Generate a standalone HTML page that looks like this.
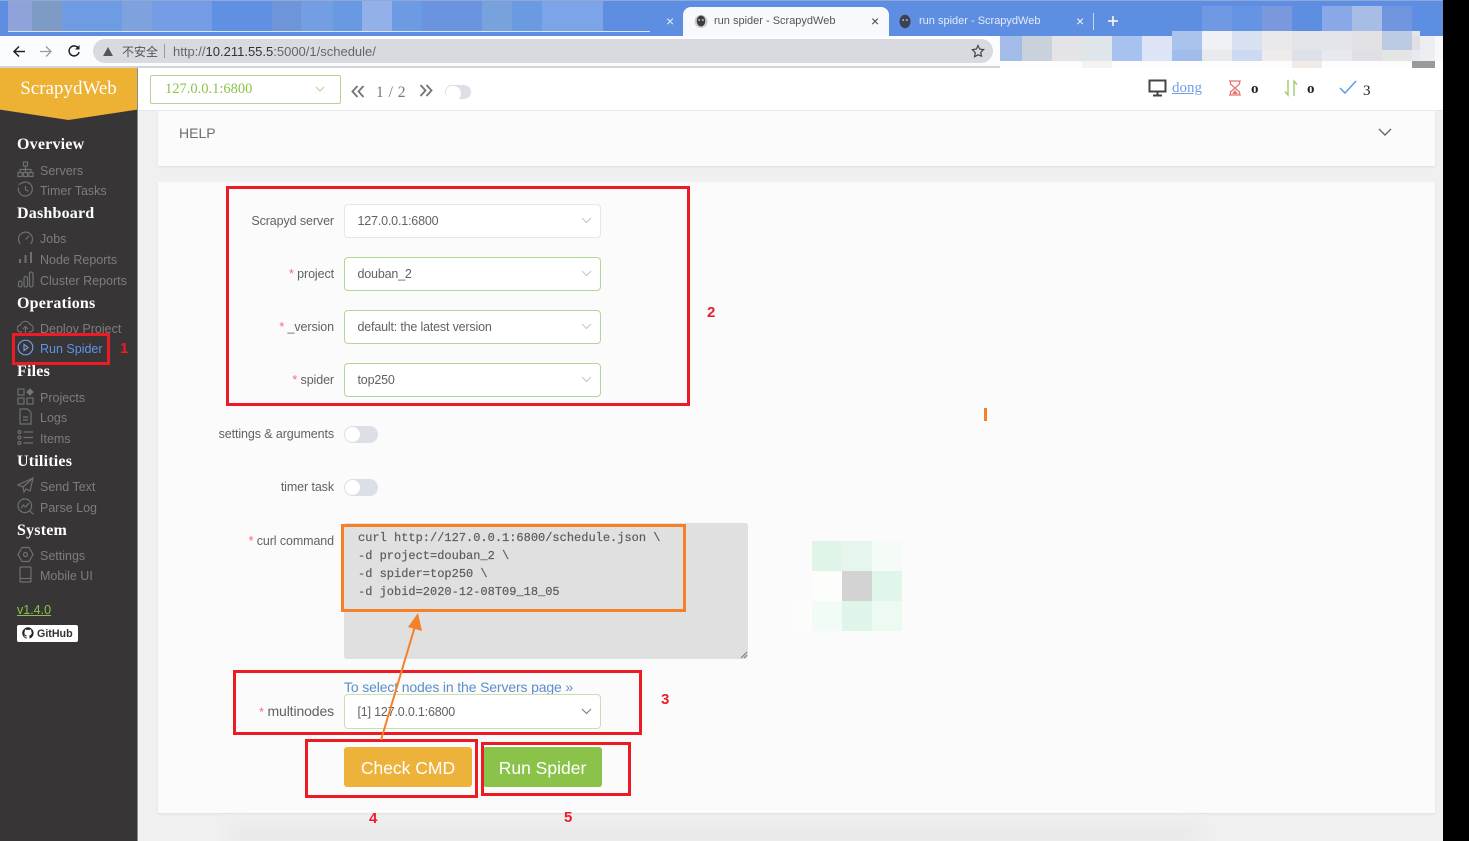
<!DOCTYPE html>
<html><head><meta charset="utf-8"><title>run spider - ScrapydWeb</title>
<style>
*{box-sizing:border-box}
html,body{margin:0;padding:0;width:1469px;height:841px;overflow:hidden;background:#000}
body{position:relative;font-family:"Liberation Sans","Noto Sans CJK SC",sans-serif}
.a,.b,.h,.n,.l,.s,.r,.num,svg.i{position:absolute}
.b{display:block}
.h{left:17px;font:bold 16px/20px "Liberation Serif",serif;color:#fff;white-space:nowrap;letter-spacing:.2px}
.n{left:40px;font-size:12.5px;line-height:20px;color:#7e7d7d;white-space:nowrap}
.l{right:1135px;font-size:12.5px;line-height:20px;color:#606266;white-space:nowrap;letter-spacing:-.1px}
.l i{font-style:normal;color:#f56c6c}
.s{left:344px;width:257px;background:#fff;border:1.5px solid #b5d597;border-radius:4px;font-size:12.5px;color:#606266;padding-left:12.5px;letter-spacing:-.18px}
.s svg{position:absolute;right:8px;top:50%;margin-top:-4px}
.r{border:3px solid #ed1c24}
.num{font:bold 15px/20px "Liberation Sans",sans-serif;color:#ed1c24}
svg.i{fill:none;stroke:#707070;stroke-width:1.2;left:17px;width:17px;height:17px}
.t{position:absolute;left:344px;width:34px;height:17px;background:#dcdfe6;border-radius:9px}
.t:after{content:"";position:absolute;left:1px;top:1px;width:15px;height:15px;background:#fff;border-radius:50%}
.m{position:absolute;left:358px;font:12px/18px "Liberation Mono",monospace;color:#5d5d5d;white-space:pre;-webkit-text-stroke:.2px #5d5d5d}
</style></head><body>

<!-- page base -->
<div class="b" style="left:0;top:0;width:1443px;height:841px;background:#f0f0f1"></div>

<!-- tab strip -->
<div class="b" style="left:0;top:0;width:1443px;height:36px;background:#5e8ee2"></div>
<div class="b" style="left:0;top:0;width:1443px;height:1px;background:#8fa8d8"></div>
<div class="b" style="left:8px;top:1px;width:24px;height:31px;background:#8fa3da"></div>
<div class="b" style="left:32px;top:1px;width:30px;height:31px;background:#7e9bc6"></div>
<div class="b" style="left:62px;top:1px;width:30px;height:31px;background:#6f9be2"></div>
<div class="b" style="left:92px;top:1px;width:30px;height:31px;background:#6e9ce4"></div>
<div class="b" style="left:122px;top:1px;width:30px;height:31px;background:#7ea2de"></div>
<div class="b" style="left:152px;top:1px;width:60px;height:31px;background:#749de5"></div>
<div class="b" style="left:212px;top:1px;width:60px;height:31px;background:#5f90e2"></div>
<div class="b" style="left:272px;top:1px;width:29px;height:31px;background:#6e95d8"></div>
<div class="b" style="left:301px;top:1px;width:32px;height:31px;background:#749ee3"></div>
<div class="b" style="left:333px;top:1px;width:29px;height:31px;background:#6a99e4"></div>
<div class="b" style="left:362px;top:1px;width:30px;height:31px;background:#92b1e8"></div>
<div class="b" style="left:392px;top:1px;width:30px;height:31px;background:#6d9be3"></div>
<div class="b" style="left:422px;top:1px;width:60px;height:31px;background:#6a94e0"></div>
<div class="b" style="left:482px;top:1px;width:30px;height:31px;background:#78a2dc"></div>
<div class="b" style="left:512px;top:1px;width:30px;height:31px;background:#6a9ae2"></div>
<div class="b" style="left:542px;top:1px;width:61px;height:31px;background:#7ca5e7"></div>
<div class="b" style="left:8px;top:31px;width:642px;height:1px;background:#dbe5f7"></div>

<div class="b" style="left:1202px;top:6px;width:30px;height:25px;background:#7099e3"></div>
<div class="b" style="left:1232px;top:6px;width:30px;height:25px;background:#6694e4"></div>
<div class="b" style="left:1262px;top:6px;width:30px;height:25px;background:#7a99dd"></div>
<div class="b" style="left:1322px;top:6px;width:30px;height:25px;background:#88a8e7"></div>
<div class="b" style="left:1352px;top:6px;width:30px;height:25px;background:#a8bde6"></div>
<div class="b" style="left:1382px;top:6px;width:30px;height:25px;background:#7096e0"></div>

<!-- tabs -->
<div class="b" style="left:683px;top:7px;width:206px;height:29px;background:#f8f9fc;border-radius:8px 8px 0 0"></div>
<div class="a" style="left:666px;top:11px;font-size:14px;line-height:20px;color:#e8eefb">×</div>
<svg class="a" style="left:694px;top:14px" width="14" height="15" viewBox="0 0 14 15"><circle cx="7" cy="7.500" r="6.500" fill="#ccc"/><ellipse cx="7" cy="7" rx="4.300" ry="5.500" fill="#3d3d3d"/><circle cx="5.200" cy="6" r="1" fill="#bbb"/><circle cx="8.800" cy="6" r="1" fill="#bbb"/></svg>
<div class="a" style="left:714px;top:11px;font-size:11px;line-height:20px;color:#555;white-space:nowrap">run spider - ScrapydWeb</div>
<div class="a" style="left:871px;top:11px;font-size:14px;line-height:20px;color:#444">×</div>
<svg class="a" style="left:898px;top:14px" width="14" height="15" viewBox="0 0 14 15"><ellipse cx="7" cy="7.500" rx="5.500" ry="6.800" fill="#3b4252"/><circle cx="5.200" cy="6" r="1" fill="#a8b4cc"/><circle cx="8.800" cy="6" r="1" fill="#a8b4cc"/></svg>
<div class="a" style="left:919px;top:11px;font-size:11px;line-height:20px;color:#e4ebfa;white-space:nowrap">run spider - ScrapydWeb</div>
<div class="a" style="left:1076px;top:11px;font-size:14px;line-height:20px;color:#eef3fd">×</div>
<div class="b" style="left:1093px;top:13px;width:1px;height:17px;background:#c5d6f5"></div>
<svg class="a" style="left:1107px;top:15px" width="12" height="12" viewBox="0 0 12 12"><path d="M6 1v10M1 6h10" stroke="#fff" stroke-width="1.5"/></svg>

<!-- toolbar -->
<div class="b" style="left:0;top:36px;width:1443px;height:31px;background:#fbfcfe"></div>
<div class="b" style="left:0;top:66px;width:1443px;height:2px;background:#d4d4d6"></div>
<svg class="a" style="left:12px;top:45px" width="14" height="13" viewBox="0 0 14 13"><path d="M13 6.500H2M7 1.500L2 6.500l5 5" fill="none" stroke="#222" stroke-width="1.500"/></svg>
<svg class="a" style="left:39px;top:45px" width="14" height="13" viewBox="0 0 14 13"><path d="M1 6.500h11M7 1.500l5 5-5 5" fill="none" stroke="#9a9a9a" stroke-width="1.300"/></svg>
<svg class="a" style="left:67px;top:44px" width="14" height="14" viewBox="0 0 14 14"><path d="M11.500 4.500A5 5 0 1 0 12 8" fill="none" stroke="#222" stroke-width="1.500"/><path d="M12.500 1v4.500H8z" fill="#222"/></svg>
<div class="b" style="left:93px;top:39px;width:900px;height:24px;background:#d9dadf;border-radius:12px"></div>
<svg class="a" style="left:103px;top:47px" width="10" height="9" viewBox="0 0 11 10"><path d="M5.500 0L11 10H0z" fill="#555"/></svg>
<div class="a" style="left:122px;top:42px;font-size:12px;line-height:20px;color:#555;white-space:nowrap">不安全</div>
<div class="b" style="left:164px;top:44px;width:1px;height:14px;background:#999"></div>
<div class="a" style="left:173px;top:42px;font-size:13px;line-height:20px;color:#666;white-space:nowrap">http://<span style="color:#333">10.211.55.5</span>:5000/1/schedule/</div>
<svg class="a" style="left:971px;top:44px" width="14" height="14" viewBox="0 0 14 14"><path d="M7 1.500l1.700 3.600 3.900.5-2.900 2.700.8 3.900L7 10.800l-3.500 1.900.8-3.900L1.400 5.600l3.900-.5z" fill="none" stroke="#444" stroke-width="1.200"/></svg>

<!-- blurred right toolbar -->
<div class="b" style="left:1000px;top:36px;width:443px;height:32px;background:#fdfdfe"></div>
<div class="b" style="left:1172px;top:31px;width:248px;height:5px;background:#e4e5ea"></div>
<div class="b" style="left:1000px;top:36px;width:22px;height:25px;background:#a2bbe8"></div>
<div class="b" style="left:1022px;top:36px;width:30px;height:25px;background:#c9d1da"></div>
<div class="b" style="left:1052px;top:36px;width:30px;height:25px;background:#e4e3e6"></div>
<div class="b" style="left:1082px;top:36px;width:30px;height:25px;background:#dfe6ea"></div>
<div class="b" style="left:1112px;top:36px;width:30px;height:25px;background:#a8c2ef"></div>
<div class="b" style="left:1142px;top:36px;width:30px;height:25px;background:#dde4f5"></div>
<div class="b" style="left:1172px;top:31px;width:30px;height:19px;background:#a9c3ec"></div>
<div class="b" style="left:1172px;top:50px;width:30px;height:11px;background:#a0bceb"></div>
<div class="b" style="left:1202px;top:31px;width:30px;height:19px;background:#eff1f6"></div>
<div class="b" style="left:1202px;top:50px;width:30px;height:11px;background:#e9eaee"></div>
<div class="b" style="left:1232px;top:31px;width:30px;height:19px;background:#d7e1f1"></div>
<div class="b" style="left:1232px;top:50px;width:30px;height:11px;background:#cbd9f2"></div>
<div class="b" style="left:1262px;top:31px;width:30px;height:19px;background:#e9e8ea"></div>
<div class="b" style="left:1262px;top:50px;width:30px;height:11px;background:#efebeb"></div>
<div class="b" style="left:1292px;top:31px;width:30px;height:19px;background:#e4e5ea"></div>
<div class="b" style="left:1292px;top:50px;width:30px;height:11px;background:#dfe1e8"></div>
<div class="b" style="left:1322px;top:31px;width:30px;height:19px;background:#e4e5ea"></div>
<div class="b" style="left:1322px;top:50px;width:30px;height:11px;background:#e7e9ee"></div>
<div class="b" style="left:1352px;top:31px;width:30px;height:19px;background:#e2e1e6"></div>
<div class="b" style="left:1352px;top:50px;width:30px;height:11px;background:#dfdfe5"></div>
<div class="b" style="left:1382px;top:31px;width:30px;height:19px;background:#bccbe3"></div>
<div class="b" style="left:1382px;top:50px;width:30px;height:11px;background:#e4e6e6"></div>
<div class="b" style="left:1412px;top:36px;width:8px;height:14px;background:#e0e0e4"></div>
<div class="b" style="left:1412px;top:50px;width:8px;height:11px;background:#e9eaf0"></div>
<div class="b" style="left:1420px;top:36px;width:15px;height:25px;background:#eceef4"></div>
<div class="b" style="left:1435px;top:36px;width:8px;height:25px;background:#f8f8fb"></div>
<div class="b" style="left:1082px;top:61px;width:30px;height:7px;background:#f4f3f0"></div>
<div class="b" style="left:1292px;top:61px;width:30px;height:7px;background:#f0ebe6"></div>
<div class="b" style="left:1412px;top:61px;width:23px;height:7px;background:#9a9a9a"></div>

<!-- navbar -->
<div class="b" style="left:138px;top:68px;width:1305px;height:43px;background:#fff;border-bottom:1px solid #e8e8e8"></div>
<div class="a" style="left:150px;top:75px;width:191px;height:29px;border:1.500px solid #b5d597;border-radius:2px;background:#fff;font:14.500px/26px 'Liberation Serif',serif;color:#8bc34a;padding-left:14px">127.0.0.1:6800
<svg class="a" style="right:15px;top:10px" width="10" height="6" viewBox="0 0 10 6"><path d="M1 1l4 4 4-4" fill="none" stroke="#b5d597" stroke-width="1.100"/></svg></div>
<svg class="a" style="left:351px;top:85px" width="14" height="13" viewBox="0 0 14 13"><path d="M6.500 1L1.500 6.500l5 5.500M12.500 1l-5 5.500 5 5.500" fill="none" stroke="#777" stroke-width="1.900"/></svg>
<div class="a" style="left:376px;top:83px;font:15.500px/20px 'Liberation Serif',serif;color:#777;white-space:nowrap;letter-spacing:.5px">1 / 2</div>
<svg class="a" style="left:419px;top:84px" width="14" height="13" viewBox="0 0 14 13"><path d="M1.500 1l5 5.500-5 5.500M7.500 1l5 5.500-5 5.500" fill="none" stroke="#777" stroke-width="1.900"/></svg>
<div class="t" style="left:445px;top:85px;width:26px;height:14px"></div>
<div class="b" style="left:446px;top:86px;width:12px;height:12px;border-radius:50%;background:#fff"></div>

<svg class="a" style="left:1148px;top:79px" width="20" height="18" viewBox="0 0 20 18"><rect x="1.500" y="1.500" width="16" height="11" fill="none" stroke="#444" stroke-width="2"/><path d="M9.500 13v3M5 16.500h9" stroke="#444" stroke-width="2"/></svg>
<div class="a" style="left:1172px;top:78px;font:15px/20px 'Liberation Serif',serif;color:#6f9ee8;text-decoration:underline">dong</div>
<svg class="a" style="left:1228px;top:80px" width="14" height="16" viewBox="0 0 14 16"><path d="M1 1h12M1 15h12M2.500 1v3l4.500 4 4.500-4V1M2.500 15v-3L7 8l4.500 4v3" fill="none" stroke="#e57373" stroke-width="1.300"/><path d="M4 14l3-4 3 4z" fill="#e57373"/></svg>
<div class="a" style="left:1251px;top:79px;font:bold 15px/20px 'Liberation Serif',serif;color:#222">o</div>
<svg class="a" style="left:1284px;top:79px" width="16" height="18" viewBox="0 0 16 18"><path d="M4 1v15L1 12.500M10 17V2l3 3.500" fill="none" stroke="#9ccc65" stroke-width="1.400"/></svg>
<div class="a" style="left:1307px;top:79px;font:bold 15px/20px 'Liberation Serif',serif;color:#222">o</div>
<svg class="a" style="left:1339px;top:80px" width="18" height="15" viewBox="0 0 18 15"><path d="M1 8l5 5L17 1" fill="none" stroke="#5f9ae8" stroke-width="1.500"/></svg>
<div class="a" style="left:1363px;top:81px;font:15px/20px 'Liberation Serif',serif;color:#222">3</div>

<!-- cards -->
<div class="b" style="left:158px;top:111px;width:1277px;height:55px;background:#fbfbfc;box-shadow:0 1px 2px #dedee0"></div>
<div class="a" style="left:179px;top:123px;font-size:14px;line-height:20px;color:#6e6e6e">HELP</div>
<svg class="a" style="left:1378px;top:128px" width="14" height="9" viewBox="0 0 14 9"><path d="M1 1l6 6 6-6" fill="none" stroke="#666" stroke-width="1.400"/></svg>
<div class="b" style="left:158px;top:182px;width:1277px;height:631px;background:#fbfbfc;box-shadow:0 1px 2px #dedee0"></div>
<div class="b" style="left:230px;top:826px;width:970px;height:15px;background:#e7e7e8;filter:blur(8px)"></div>

<!-- sidebar -->
<div class="b" style="left:0;top:68px;width:138px;height:773px;background:#373535;border-right:1px solid #8a8a8a"></div>
<div class="b" style="left:0;top:68px;width:137px;height:52px;background:#edb133;clip-path:polygon(0 0,100% 0,100% 80%,50% 100%,0 80%)"></div>
<div class="a" style="left:0;top:78px;width:137px;text-align:center;font:19px/22px 'Liberation Serif',serif;color:#fff">ScrapydWeb</div>

<div class="h" style="top:135px">Overview</div>
<svg class="i" style="top:161px" viewBox="0 0 17 17"><rect x="6.500" y="1" width="4" height="4"/><rect x="1" y="11.500" width="4" height="4"/><rect x="6.500" y="11.500" width="4" height="4"/><rect x="12" y="11.500" width="4" height="4"/><path d="M8.500 5v6.500M3 11.500V8.500h11v3"/></svg>
<div class="n" style="top:161px">Servers</div>
<svg class="i" style="top:181px" viewBox="0 0 17 17"><path d="M4 2.500a7 7 0 1 1-2.500 4M8.500 5v4l3 1M1.500 3.500L4 2.500"/></svg>
<div class="n" style="top:181px">Timer Tasks</div>
<div class="h" style="top:204px">Dashboard</div>
<svg class="i" style="top:230px" viewBox="0 0 17 17"><path d="M3.500 14a7 7 0 1 1 10 0"/><path d="M8.500 9.500L12 6"/></svg>
<div class="n" style="top:229px">Jobs</div>
<svg class="i" style="top:250px;stroke-width:2" viewBox="0 0 17 17"><path d="M3 13V9M8.500 13V5M14 13V2"/></svg>
<div class="n" style="top:250px">Node Reports</div>
<svg class="i" style="top:271px" viewBox="0 0 17 17"><rect x="1.500" y="10" width="3.500" height="6" rx="1.700"/><rect x="7" y="5.500" width="3.500" height="10.500" rx="1.700"/><rect x="12.500" y="1" width="3.500" height="15" rx="1.700"/></svg>
<div class="n" style="top:271px">Cluster Reports</div>
<div class="h" style="top:294px">Operations</div>
<svg class="i" style="top:319px" viewBox="0 0 17 17"><path d="M5 13H4a3.500 3.500 0 0 1-.5-7A5 5 0 0 1 13 5.500a3.800 3.800 0 0 1 0 7.500h-1M8.500 16V8M6 10l2.500-2.500L11 10"/></svg>
<div class="n" style="top:319px">Deploy Project</div>
<svg class="i" style="top:339px;stroke:#6f9ae0" viewBox="0 0 17 17"><circle cx="8.500" cy="8.500" r="7.300"/><path d="M7 5.500l4 3-4 3z"/></svg>
<div class="n" style="top:339px;color:#5f93e8">Run Spider</div>
<div class="h" style="top:362px">Files</div>
<svg class="i" style="top:388px" viewBox="0 0 17 17"><rect x="1" y="1" width="6" height="6"/><rect x="1" y="10" width="6" height="6"/><rect x="10" y="10" width="6" height="6"/><path d="M13 1l3 3-3 3-3-3z" fill="#777"/></svg>
<div class="n" style="top:388px">Projects</div>
<svg class="i" style="top:408px" viewBox="0 0 17 17"><path d="M3 1h7.500L14 4.500V16H3zM6 9h5M6 12h5"/></svg>
<div class="n" style="top:408px">Logs</div>
<svg class="i" style="top:429px" viewBox="0 0 17 17"><circle cx="2.500" cy="3" r="1.500"/><circle cx="2.500" cy="8.500" r="1.500"/><circle cx="2.500" cy="14" r="1.500"/><path d="M6.500 3H16M6.500 8.500H16M6.500 14H16"/></svg>
<div class="n" style="top:429px">Items</div>
<div class="h" style="top:452px">Utilities</div>
<svg class="i" style="top:477px" viewBox="0 0 17 17"><path d="M16 1L1 8l5 2zM16 1L6 10l1 5 2-3 4 2z"/></svg>
<div class="n" style="top:477px">Send Text</div>
<svg class="i" style="top:498px" viewBox="0 0 17 17"><circle cx="7.800" cy="7.800" r="6.800"/><path d="M12.500 12.500L16.500 16.500M4 10l2.500-3 2 2L12 5"/></svg>
<div class="n" style="top:498px">Parse Log</div>
<div class="h" style="top:521px">System</div>
<svg class="i" style="top:546px" viewBox="0 0 17 17"><path d="M5 1.500h7l4 7-4 7H5l-4-7z"/><circle cx="8.500" cy="8.500" r="2"/></svg>
<div class="n" style="top:546px">Settings</div>
<svg class="i" style="top:566px" viewBox="0 0 17 17"><rect x="3" y="1" width="11" height="15" rx="1"/><path d="M3 12.500h11"/></svg>
<div class="n" style="top:566px">Mobile UI</div>
<div class="a" style="left:17px;top:600px;font-size:12.500px;line-height:20px;color:#8bc34a;text-decoration:underline">v1.4.0</div>
<div class="b" style="left:17px;top:625px;width:61px;height:17px;background:#fff;border-radius:2px"></div>
<svg class="a" style="left:22px;top:627px" width="12" height="12" viewBox="0 0 12 12"><path d="M6 .3a5.800 5.800 0 0 0-1.800 11.300c.3 0 .4-.1.400-.3v-1c-1.600.3-2-.8-2-.8-.3-.7-.7-.9-.7-.9-.5-.4 0-.4 0-.4.600 0 .9.600.9.600.5.900 1.400.6 1.800.5 0-.4.200-.6.400-.8-1.300-.1-2.600-.6-2.600-2.900 0-.6.200-1.200.6-1.600-.1-.1-.3-.8 0-1.600 0 0 .5-.2 1.600.6a5.500 5.500 0 0 1 2.900 0c1.100-.8 1.600-.6 1.600-.6.3.8.100 1.500 0 1.600.4.400.6 1 .6 1.600 0 2.300-1.400 2.800-2.600 2.900.2.200.4.500.4 1.100v1.600c0 .2.100.3.400.3A5.800 5.800 0 0 0 6 .3z" fill="#222"/></svg>
<div class="a" style="left:37px;top:624px;font:bold 10.700px/20px 'Liberation Sans',sans-serif;color:#333">GitHub</div>

<!-- form -->
<div class="l" style="top:211px">Scrapyd server</div>
<div class="s" style="top:204px;height:34px;line-height:33px;border-color:#e4e6eb">127.0.0.1:6800<svg width="11" height="7" viewBox="0 0 11 7"><path d="M1 1l4.500 4.500L10 1" fill="none" stroke="#c0c4cc"/></svg></div>
<div class="l" style="top:264px"><i>*</i> project</div>
<div class="s" style="top:257px;height:34px;line-height:33px">douban_2<svg width="11" height="7" viewBox="0 0 11 7"><path d="M1 1l4.500 4.500L10 1" fill="none" stroke="#c0c4cc"/></svg></div>
<div class="l" style="top:317px"><i>*</i> _version</div>
<div class="s" style="top:310px;height:34px;line-height:33px">default: the latest version<svg width="11" height="7" viewBox="0 0 11 7"><path d="M1 1l4.500 4.500L10 1" fill="none" stroke="#c0c4cc"/></svg></div>
<div class="l" style="top:370px"><i>*</i> spider</div>
<div class="s" style="top:363px;height:34px;line-height:33px">top250<svg width="11" height="7" viewBox="0 0 11 7"><path d="M1 1l4.500 4.500L10 1" fill="none" stroke="#c0c4cc"/></svg></div>

<div class="l" style="top:424px">settings &amp; arguments</div>
<div class="t" style="top:426px"></div>
<div class="l" style="top:477px">timer task</div>
<div class="t" style="top:479px"></div>

<div class="l" style="top:531px"><i>*</i> curl command</div>
<div class="b" style="left:344px;top:523px;width:404px;height:136px;background:#e0e0e0;border-radius:3px"></div>
<svg class="a" style="left:740px;top:651px" width="8" height="8" viewBox="0 0 8 8"><path d="M1 7l6-6M4 7l3-3" stroke="#777"/></svg>
<div class="m" style="top:529px">curl http://127.0.0.1:6800/schedule.json \
-d project=douban_2 \
-d spider=top250 \
-d jobid=2020-12-08T09_18_05</div>

<div class="a" style="left:344px;top:677px;font-size:14px;line-height:20px;color:#5b8fc9;white-space:nowrap;letter-spacing:-.14px">To select nodes in the Servers page »</div>
<div class="l" style="top:701px;font-size:14px;letter-spacing:-.12px"><i style="font-size:12px">*</i> multinodes</div>
<div class="s" style="top:694px;height:35px;line-height:35px;border-color:#c9dfb1">[1] 127.0.0.1:6800<svg width="11" height="7" viewBox="0 0 11 7"><path d="M1 1l4.500 4.500L10 1" fill="none" stroke="#777"/></svg></div>

<div class="a" style="left:344px;top:747px;width:128px;height:40px;background:#ecb23a;border-radius:3px;color:#fff;font-size:17.500px;line-height:42px;text-align:center">Check CMD</div>
<div class="a" style="left:483px;top:747px;width:119px;height:40px;background:#8bc34a;border-radius:3px;color:#fff;font-size:17.500px;line-height:42px;text-align:center">Run Spider</div>

<!-- pixelated blur -->
<div class="b" style="left:793px;top:601px;width:19px;height:30px;background:#fcfcfb"></div>
<div class="b" style="left:812px;top:541px;width:30px;height:30px;background:#dff5e8"></div>
<div class="b" style="left:842px;top:541px;width:30px;height:30px;background:#e6f6ec"></div>
<div class="b" style="left:872px;top:541px;width:30px;height:30px;background:#f5fbf7"></div>
<div class="b" style="left:812px;top:571px;width:30px;height:30px;background:#fdfdfb"></div>
<div class="b" style="left:842px;top:571px;width:30px;height:30px;background:#d3d3d3"></div>
<div class="b" style="left:872px;top:571px;width:30px;height:30px;background:#e0f6ea"></div>
<div class="b" style="left:812px;top:601px;width:30px;height:30px;background:#f2fcf7"></div>
<div class="b" style="left:842px;top:601px;width:30px;height:30px;background:#dff5e9"></div>
<div class="b" style="left:872px;top:601px;width:30px;height:30px;background:#edfaf2"></div>
<div class="b" style="left:984px;top:408px;width:3px;height:13px;background:#f5802a"></div>

<!-- annotations -->
<div class="r" style="left:12px;top:333px;width:98px;height:32px"></div>
<div class="r" style="left:226px;top:186px;width:464px;height:220px"></div>
<div class="r" style="left:233px;top:670px;width:409px;height:65px"></div>
<div class="r" style="left:305px;top:739px;width:173px;height:59px"></div>
<div class="r" style="left:481px;top:742px;width:150px;height:54px"></div>
<div class="a" style="left:341px;top:524px;width:345px;height:88px;border:3px solid #f5802a"></div>
<svg class="a" style="left:370px;top:605px" width="60" height="140" viewBox="0 0 60 140"><path d="M11 135L46 18" stroke="#f5802a" stroke-width="2" fill="none"/><path d="M48 8l4 18-14-4z" fill="#f5802a"/></svg>
<div class="num" style="left:120px;top:339px">1</div>
<div class="num" style="left:707px;top:303px">2</div>
<div class="num" style="left:661px;top:690px">3</div>
<div class="num" style="left:369px;top:809px">4</div>
<div class="num" style="left:564px;top:808px">5</div>

</body></html>
